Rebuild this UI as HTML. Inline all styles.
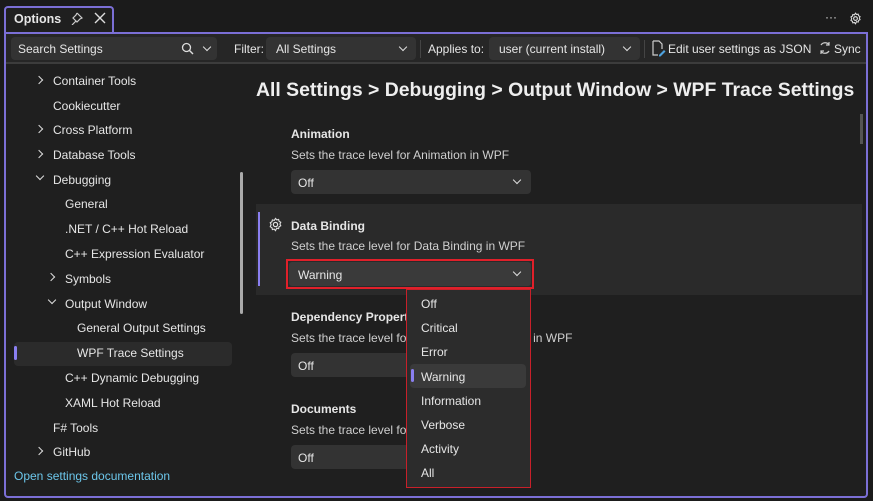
<!DOCTYPE html>
<html><head><style>
*{box-sizing:border-box;margin:0;padding:0}
body{width:873px;height:501px;background:#1b1b1b;font-family:"Liberation Sans",sans-serif;color:#e6e6e6;font-size:12px;position:relative;overflow:hidden}
.a{position:absolute;white-space:nowrap}
.tab{left:4px;top:6px;width:110px;height:28px;border:2px solid #7b6fd6;border-bottom:none;border-radius:4px 4px 0 0;background:#1f1f1f}
.panel{left:4px;top:32px;width:864px;height:466px;border:2px solid #7b6fd6;border-radius:0 0 4px 4px;background:#1f1f1f}
.tb{left:6px;top:34px;width:860px;height:30px;background:#262626;border-bottom:2px solid #3c3c3c}
.inp{background:#333;border-radius:4px;height:23px}
.chev{width:6px;height:6px;border-right:1.5px solid #ddd;border-bottom:1.5px solid #ddd;transform:rotate(45deg)}
.rch{width:6px;height:6px;border-right:1.5px solid #ddd;border-bottom:1.5px solid #ddd;transform:rotate(-45deg)}
.tr{font-size:12px}
.h{font-weight:bold;font-size:12px}
.d{color:#cfcfcf;font-size:12px}
.sel{background:#333;border-radius:4px;height:24px;width:240px}
</style></head><body>
<div class="a tab"></div>
<div class="a" style="left:14px;top:12px;font-weight:bold;font-size:12.5px">Options</div>
<svg class="a" style="left:70px;top:12px" width="13" height="13" viewBox="0 0 13 13"><path d="M7 1l5 5-2 1-3 3-1-1-4 4M7 1l-1 2-3 3 4 4" fill="none" stroke="#ccc" stroke-width="1.2"/></svg>
<svg class="a" style="left:94px;top:12px" width="12" height="12" viewBox="0 0 12 12"><path d="M1 1L11 11M11 1L1 11" stroke="#ddd" stroke-width="1.4"/></svg>
<div class="a" style="left:825px;top:10px;color:#ddd;font-size:12px">···</div>
<svg class="a" style="left:849px;top:12px" width="13" height="13" viewBox="0 0 16 16"><circle cx="8" cy="8" r="2.3" fill="none" stroke="#ddd" stroke-width="1.4"/><path d="M8 1.5l1.3 1.6 2-.5.5 2 1.8 1-.9 1.9.9 1.9-1.8 1-.5 2-2-.5L8 14.5l-1.3-1.6-2 .5-.5-2-1.8-1L3.3 8l-.9-1.9 1.8-1 .5-2 2 .5z" fill="none" stroke="#ddd" stroke-width="1.3"/></svg>
<div class="a panel"></div>
<div class="a tb"></div>
<div class="a inp" style="left:11px;top:37px;width:206px"></div>
<div class="a" style="left:18px;top:42px">Search Settings</div>
<svg class="a" style="left:181px;top:42px" width="13" height="13" viewBox="0 0 13 13"><circle cx="5.5" cy="5.5" r="4" fill="none" stroke="#ddd" stroke-width="1.3"/><path d="M8.5 8.5L12 12" stroke="#ddd" stroke-width="1.4"/></svg>
<div class="a chev" style="left:204px;top:44px"></div>
<div class="a" style="left:234px;top:42px">Filter:</div>
<div class="a inp" style="left:266px;top:37px;width:150px"></div>
<div class="a" style="left:276px;top:42px">All Settings</div>
<div class="a chev" style="left:400px;top:44px"></div>
<div class="a" style="left:420px;top:40px;width:1px;height:18px;background:#444"></div>
<div class="a" style="left:428px;top:42px">Applies to:</div>
<div class="a inp" style="left:489px;top:37px;width:151px"></div>
<div class="a" style="left:499px;top:42px">user (current install)</div>
<div class="a chev" style="left:624px;top:44px"></div>
<div class="a" style="left:644px;top:40px;width:1px;height:18px;background:#444"></div>
<svg class="a" style="left:652px;top:40px" width="14" height="17" viewBox="0 0 14 17"><path d="M1 1h6l3 3v5M1 1v14h5" fill="none" stroke="#ccc" stroke-width="1.2"/><path d="M7 15l5-5 1.5 1.5-5 5H7z" fill="#4fa3e0"/></svg>
<div class="a" style="left:668px;top:42px">Edit user settings as JSON</div>
<svg class="a" style="left:818px;top:41px" width="14" height="14" viewBox="0 0 14 14"><path d="M11 3.5A5 5 0 0 0 3 4M3 10.5A5 5 0 0 0 11 10" fill="none" stroke="#ccc" stroke-width="1.3"/><path d="M11 1v3H8M3 13v-3h3" fill="none" stroke="#ccc" stroke-width="1.2"/></svg>
<div class="a" style="left:834px;top:42px">Sync</div>

<div class="a" style="left:240px;top:172px;width:3px;height:142px;background:#aaa;border-radius:2px"></div>
<div class="a" style="left:14px;top:342px;width:218px;height:24px;background:#2b2b2b;border-radius:4px"></div>
<div class="a" style="left:14px;top:346px;width:3px;height:14px;background:#8a7ff0;border-radius:2px"></div>
<div class="a rch" style="left:36px;top:77px"></div>
<div class="a tr" style="left:53px;top:74px">Container Tools</div>
<div class="a tr" style="left:53px;top:99px">Cookiecutter</div>
<div class="a rch" style="left:36px;top:126px"></div>
<div class="a tr" style="left:53px;top:123px">Cross Platform</div>
<div class="a rch" style="left:36px;top:151px"></div>
<div class="a tr" style="left:53px;top:148px">Database Tools</div>
<div class="a chev" style="left:37px;top:173px"></div>
<div class="a tr" style="left:53px;top:173px">Debugging</div>
<div class="a tr" style="left:65px;top:197px">General</div>
<div class="a tr" style="left:65px;top:222px">.NET / C++ Hot Reload</div>
<div class="a tr" style="left:65px;top:247px">C++ Expression Evaluator</div>
<div class="a rch" style="left:48px;top:274px"></div>
<div class="a tr" style="left:65px;top:272px">Symbols</div>
<div class="a chev" style="left:49px;top:297px"></div>
<div class="a tr" style="left:65px;top:297px">Output Window</div>
<div class="a tr" style="left:77px;top:321px">General Output Settings</div>
<div class="a tr" style="left:77px;top:346px">WPF Trace Settings</div>
<div class="a tr" style="left:65px;top:371px">C++ Dynamic Debugging</div>
<div class="a tr" style="left:65px;top:396px">XAML Hot Reload</div>
<div class="a tr" style="left:53px;top:421px">F# Tools</div>
<div class="a rch" style="left:36px;top:448px"></div>
<div class="a tr" style="left:53px;top:445px">GitHub</div>
<div class="a tr" style="left:14px;top:469px;color:#6cc6ea">Open settings documentation</div>

<div class="a" style="left:256px;top:79px;font-size:19.4px;font-weight:bold;color:#eee">All Settings &gt; Debugging &gt; Output Window &gt; WPF Trace Settings</div>
<div class="a" style="left:860px;top:114px;width:3px;height:30px;background:#555"></div>

<div class="a h" style="left:291px;top:127px">Animation</div>
<div class="a d" style="left:291px;top:148px">Sets the trace level for Animation in WPF</div>
<div class="a sel" style="left:291px;top:170px"></div>
<div class="a" style="left:298px;top:176px">Off</div>
<div class="a chev" style="left:514px;top:177px"></div>

<div class="a" style="left:256px;top:204px;width:606px;height:91px;background:#2a2a2a"></div>
<div class="a" style="left:258px;top:212px;width:2px;height:74px;background:#8a7ff0"></div>
<svg class="a" style="left:268px;top:217px" width="15" height="15" viewBox="0 0 16 16"><circle cx="8" cy="8" r="2.3" fill="none" stroke="#ddd" stroke-width="1.3"/><path d="M8 1.5l1.3 1.6 2-.5.5 2 1.8 1-.9 1.9.9 1.9-1.8 1-.5 2-2-.5L8 14.5l-1.3-1.6-2 .5-.5-2-1.8-1L3.3 8l-.9-1.9 1.8-1 .5-2 2 .5z" fill="none" stroke="#ddd" stroke-width="1.2"/></svg>
<div class="a h" style="left:291px;top:219px">Data Binding</div>
<div class="a d" style="left:291px;top:239px">Sets the trace level for Data Binding in WPF</div>
<div class="a" style="left:286px;top:259px;width:248px;height:30px;border:2px solid #e0202a"></div>
<div class="a" style="left:289px;top:262px;width:242px;height:24px;background:#3a3a3a;border-radius:3px"></div>
<div class="a" style="left:298px;top:268px">Warning</div>
<div class="a chev" style="left:514px;top:269px"></div>

<div class="a h" style="left:291px;top:310px">Dependency Property</div>
<div class="a d" style="left:291px;top:331px">Sets the trace level for Dependency Property in WPF</div>
<div class="a sel" style="left:291px;top:353px"></div>
<div class="a" style="left:298px;top:359px">Off</div>

<div class="a h" style="left:291px;top:402px">Documents</div>
<div class="a d" style="left:291px;top:423px">Sets the trace level for Documents in WPF</div>
<div class="a sel" style="left:291px;top:445px"></div>
<div class="a" style="left:298px;top:451px">Off</div>

<div class="a" style="left:406px;top:289px;width:125px;height:199px;border:1.5px solid #c8202a;background:#2c2c2c"></div>
<div class="a" style="left:410px;top:364px;width:116px;height:24px;background:#3a3a3a;border-radius:4px"></div>
<div class="a" style="left:411px;top:369px;width:3px;height:13px;background:#8a7ff0;border-radius:2px"></div>
<div class="a tr" style="left:421px;top:297px">Off</div>
<div class="a tr" style="left:421px;top:321px">Critical</div>
<div class="a tr" style="left:421px;top:345px">Error</div>
<div class="a tr" style="left:421px;top:370px">Warning</div>
<div class="a tr" style="left:421px;top:394px">Information</div>
<div class="a tr" style="left:421px;top:418px">Verbose</div>
<div class="a tr" style="left:421px;top:442px">Activity</div>
<div class="a tr" style="left:421px;top:466px">All</div>
</body></html>
